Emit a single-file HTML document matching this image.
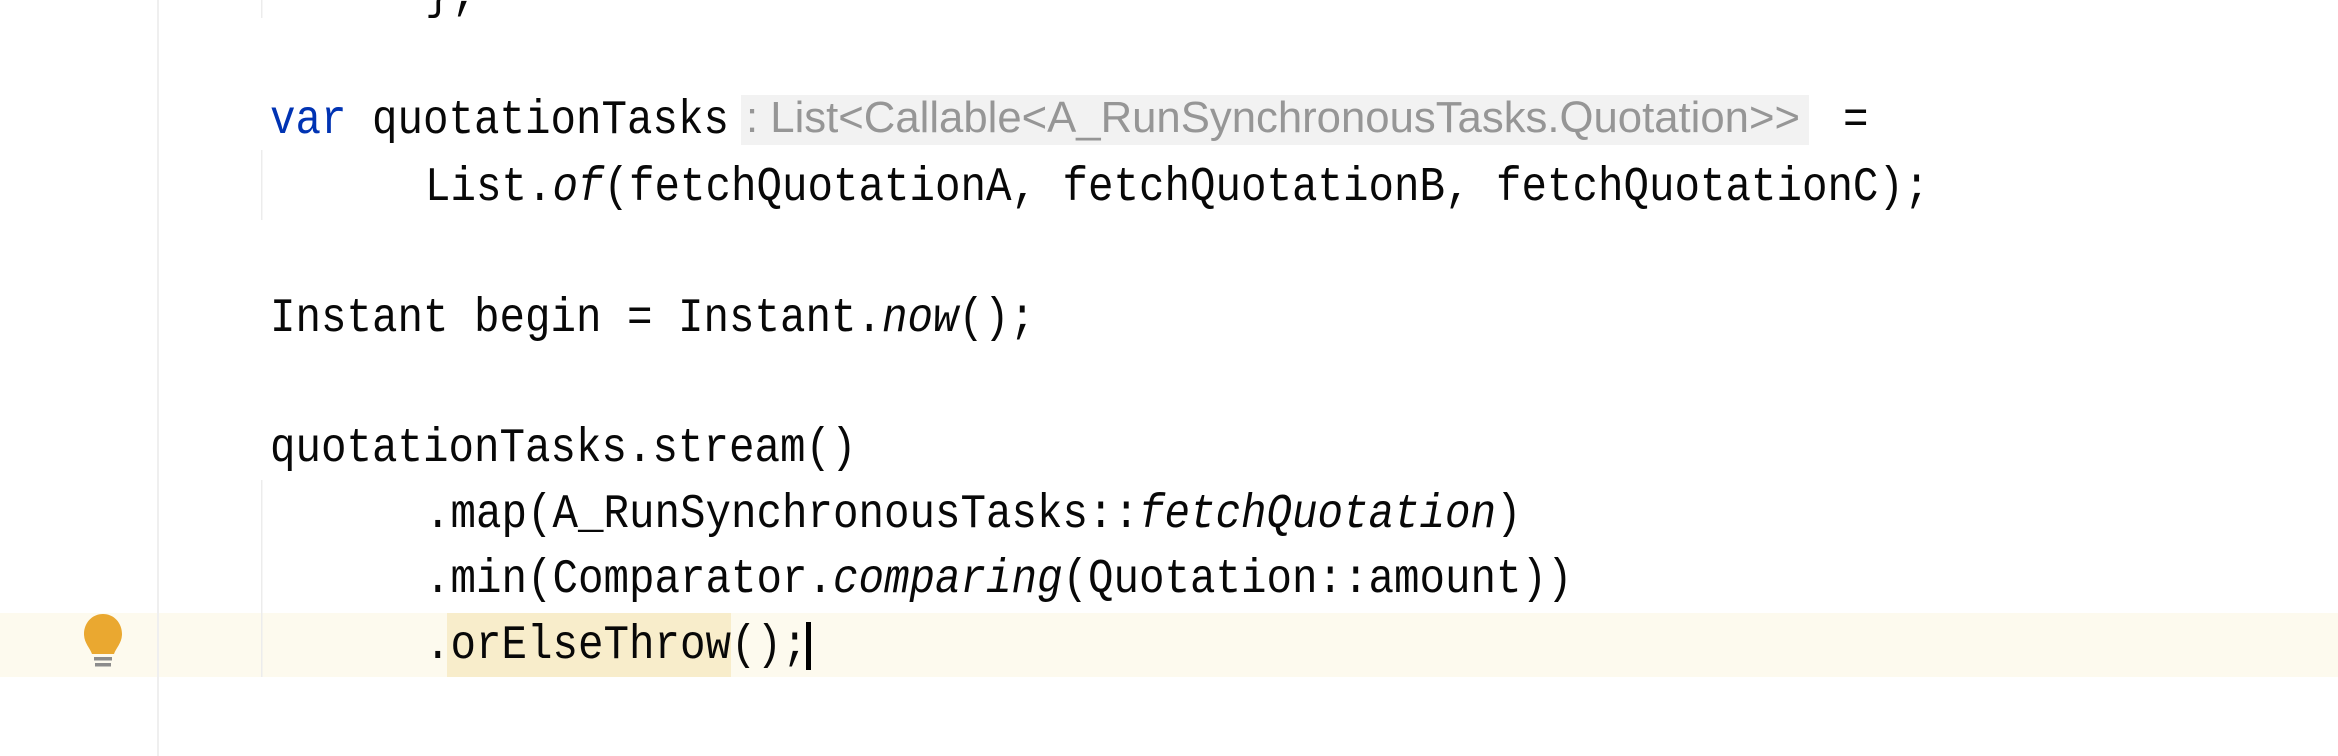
<!DOCTYPE html>
<html><head><meta charset="utf-8"><style>
html,body{margin:0;padding:0;background:#fff;width:2338px;height:756px;overflow:hidden}
svg{display:block}
.c{font-family:"Liberation Mono",monospace;font-size:42.5px;fill:#080808}
.i{font-style:italic}
.k{fill:#0033b3}
.h{font-family:"Liberation Sans",sans-serif;font-size:40px;fill:#969696}
</style></head><body>
<svg width="2338" height="756" viewBox="0 0 2338 756">
<rect x="0" y="613" width="2338" height="64" fill="#fdfaee"/>
<rect x="157" y="0" width="2" height="756" fill="#efefef"/>
<rect x="261" y="0" width="1.5" height="18" fill="#ececec"/>
<rect x="261" y="150" width="1.5" height="70" fill="#ececec"/>
<rect x="261" y="480" width="1.5" height="197" fill="#ececec"/>
<rect x="741" y="95" width="1068" height="50" fill="#f2f2f2"/>
<rect x="447" y="613" width="284" height="64" fill="#f8edcb"/>
<g>
<path d="M103 614 C92 614 84 623 84 634 C84 643 90 648 92 654 L114 654 C116 648 122 643 122 634 C122 623 114 614 103 614 Z" fill="#eaa830"/>
<rect x="94" y="657" width="18" height="3.5" fill="#8c8c8c"/>
<rect x="95" y="663" width="16" height="3.5" fill="#8c8c8c"/>
</g>
<g class="c">
<g transform="translate(0,8) scale(1,1.14)"><text x="425" y="0">};</text></g>
<g transform="translate(0,133) scale(1,1.14)"><text x="270" y="0"><tspan class="k">var</tspan> quotationTasks</text></g>
<g transform="translate(0,133) scale(1,1.14)"><text x="1843" y="0">=</text></g>
<g transform="translate(0,200) scale(1,1.14)"><text x="425" y="0">List.<tspan class="i">of</tspan>(fetchQuotationA, fetchQuotationB, fetchQuotationC);</text></g>
<g transform="translate(0,331) scale(1,1.14)"><text x="270" y="0">Instant begin = Instant.<tspan class="i">now</tspan>();</text></g>
<g transform="translate(0,461) scale(1,1.14)"><text x="270" y="0">quotationTasks.stream()</text></g>
<g transform="translate(0,527) scale(1,1.14)"><text x="425" y="0">.map(A_RunSynchronousTasks::<tspan class="i">fetchQuotation</tspan>)</text></g>
<g transform="translate(0,592) scale(1,1.14)"><text x="425" y="0">.min(Comparator.<tspan class="i">comparing</tspan>(Quotation::amount))</text></g>
<g transform="translate(0,658) scale(1,1.14)"><text x="425" y="0">.orElseThrow();</text></g>
</g>
<g transform="translate(0,132) scale(1,1.1)"><text class="h" x="746" y="0" textLength="1054" lengthAdjust="spacingAndGlyphs">: List&lt;Callable&lt;A_RunSynchronousTasks.Quotation&gt;&gt;</text></g>
<rect x="806" y="622" width="5" height="48" fill="#000"/>
</svg>
</body></html>
